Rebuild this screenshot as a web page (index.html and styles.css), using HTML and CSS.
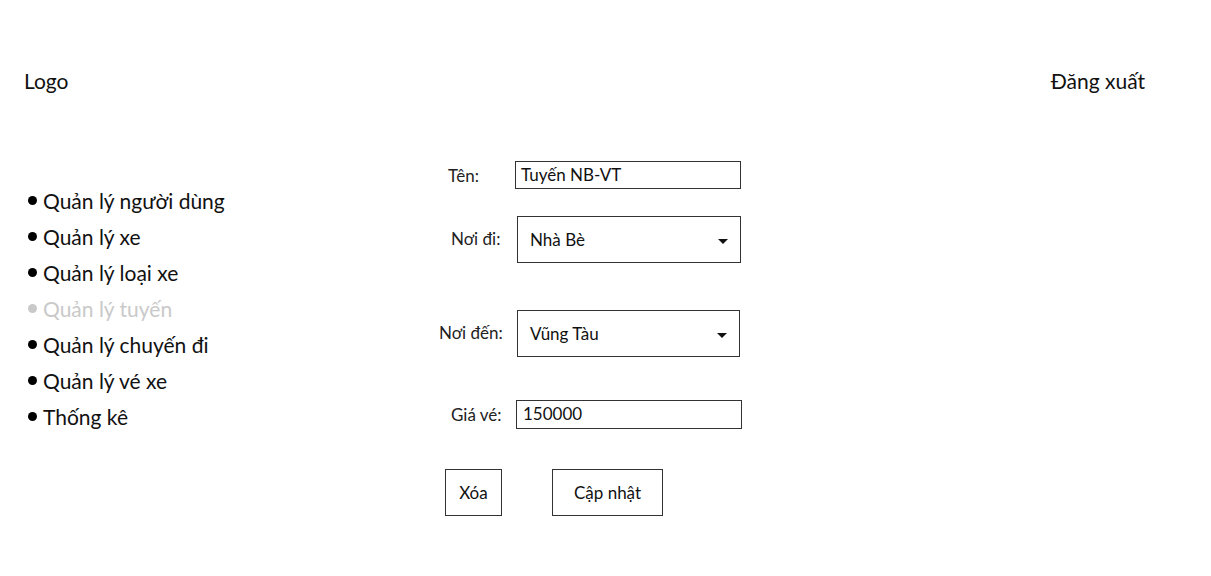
FILE: index.html
```html
<!DOCTYPE html>
<html lang="vi">
<head>
<meta charset="utf-8">
<title>Quản lý tuyến</title>
<link rel="stylesheet" href="styles.css">
</head>
<body>
<header class="header">
  <div class="logo">Logo</div>
  <a class="logout">Đăng xuất</a>
</header>
<main class="main">
  <nav class="sidebar">
    <ul class="menu">
      <li class="menu-item">Quản lý người dùng</li>
      <li class="menu-item">Quản lý xe</li>
      <li class="menu-item">Quản lý loại xe</li>
      <li class="menu-item is-active">Quản lý tuyến</li>
      <li class="menu-item">Quản lý chuyến đi</li>
      <li class="menu-item">Quản lý vé xe</li>
      <li class="menu-item">Thống kê</li>
    </ul>
  </nav>
  <section class="form">
    <div class="row row-name">
      <label class="label">Tên:</label>
      <div class="field input">Tuyến NB-VT</div>
    </div>
    <div class="row row-from">
      <label class="label">Nơi đi:</label>
      <div class="field select"><span>Nhà Bè</span><span class="caret"></span></div>
    </div>
    <div class="row row-to">
      <label class="label">Nơi đến:</label>
      <div class="field select"><span>Vũng Tàu</span><span class="caret"></span></div>
    </div>
    <div class="row row-price">
      <label class="label">Giá vé:</label>
      <div class="field input">150000</div>
    </div>
    <div class="actions">
      <button class="btn btn-delete">Xóa</button>
      <button class="btn btn-update">Cập nhật</button>
    </div>
  </section>
</main>
</body>
</html>
```

FILE: styles.css
```css
* { box-sizing: border-box; }

body {
  margin: 0;
  background: #fff;
  color: #111;
  font-family: "Lato", "Liberation Sans", sans-serif;
}

.header {
  display: flex;
  justify-content: space-between;
  align-items: center;
  padding: 69px 66px 0 24px;
  font-size: 21px;
  line-height: 24px;
}

.logout { color: #111; }

.main {
  display: flex;
  margin-top: 68px;
}

.sidebar {
  width: 438px;
  flex: 0 0 438px;
  padding: 22px 0 0 28px;
}

.menu {
  list-style: none;
  margin: 0;
  padding: 0;
}

.menu-item {
  display: flex;
  align-items: center;
  gap: 6px;
  font-size: 21px;
  line-height: 36px;
  color: #111;
}

.menu-item::before {
  content: "";
  width: 9px;
  height: 9px;
  border-radius: 50%;
  background: #000;
  margin-top: -1px;
}

.menu-item.is-active { color: #c9c9c9; }
.menu-item.is-active::before { background: #c9c9c9; }

.form {
  display: flex;
  flex-direction: column;
  font-size: 17px;
}

.row {
  display: flex;
  align-items: center;
}

.label {
  flex: 0 0 auto;
  color: #222;
}

.field {
  border: 1px solid #333;
  color: #111;
}

.input {
  height: 28px;
  line-height: 26px;
  padding: 0 5px;
  width: 226px;
}

.select {
  height: 47px;
  display: flex;
  align-items: center;
  justify-content: space-between;
  padding: 0 12px 0 12px;
}

.caret {
  width: 0;
  height: 0;
  border-left: 5px solid transparent;
  border-right: 5px solid transparent;
  border-top: 5px solid #111;
  margin-top: 3px;
}

.row-name .label { width: 77px; padding-left: 10px; }

.row-from { margin-top: 27px; }
.row-from .label { width: 79px; padding-left: 13px; margin-top: -3px; }
.row-from .field { width: 224px; }

.row-to { margin-top: 47px; }
.row-to .label { width: 79px; padding-left: 1px; margin-top: -3px; }
.row-to .field { width: 223px; }

.row-price { margin-top: 43px; }
.row-price .label { width: 78px; padding-left: 13px; }
.row-price .field { height: 29px; padding-left: 6px; }

.actions {
  display: flex;
  margin-top: 40px;
  padding-left: 7px;
  gap: 50px;
}

.btn {
  height: 47px;
  background: #fff;
  border: 1px solid #333;
  font-family: inherit;
  font-size: 17px;
  color: #111;
  padding: 0;
}

.btn-delete { width: 57px; }
.btn-update { width: 111px; }
```
